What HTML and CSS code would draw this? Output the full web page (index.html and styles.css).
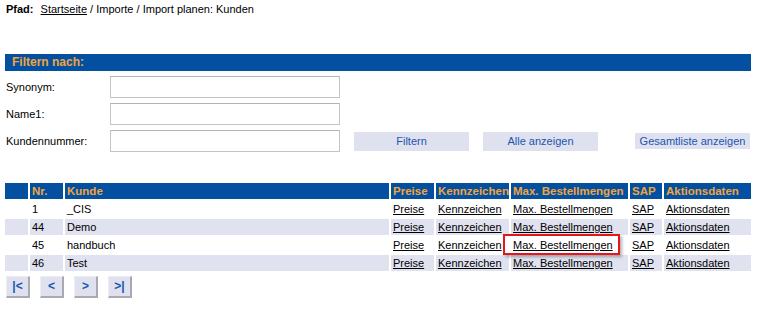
FILE: index.html
```html
<!DOCTYPE html>
<html lang="de">
<head>
  <meta charset="UTF-8" />
  <title>Import planen: Kunden</title>
  <link rel="stylesheet" href="styles.css">
</head>
<body>
  <div class="path">
    <b>Pfad:</b> <a href="#">Startseite</a> / Importe / Import planen: Kunden
  </div>

  <div class="filter">
    <div class="filter-head">Filtern nach:</div>
    <div class="filter-row">
      <label>Synonym:</label>
      <input type="text" />
    </div>
    <div class="filter-row">
      <label>Name1:</label>
      <input type="text" />
    </div>
    <div class="filter-row">
      <label>Kundennummer:</label>
      <input type="text" />
      <button class="btn">Filtern</button>
      <button class="btn">Alle anzeigen</button>
      <button class="btn btn-wide">Gesamtliste anzeigen</button>
    </div>
  </div>

  <table class="list">
    <colgroup>
      <col style="width: 23px" />
      <col style="width: 33px" />
      <col style="width: 324px" />
      <col style="width: 43px" />
      <col style="width: 73px" />
      <col style="width: 117px" />
      <col style="width: 32px" />
      <col style="width: 87px" />
    </colgroup>
    <thead>
      <tr>
        <th></th>
        <th>Nr.</th>
        <th>Kunde</th>
        <th>Preise</th>
        <th>Kennzeichen</th>
        <th>Max. Bestellmengen</th>
        <th>SAP</th>
        <th>Aktionsdaten</th>
      </tr>
    </thead>
    <tbody>
      <tr>
        <td></td>
        <td>1</td>
        <td>_CIS</td>
        <td><a href="#">Preise</a></td>
        <td><a href="#">Kennzeichen</a></td>
        <td><a href="#">Max. Bestellmengen</a></td>
        <td><a href="#">SAP</a></td>
        <td><a href="#">Aktionsdaten</a></td>
      </tr>
      <tr class="alt">
        <td></td>
        <td>44</td>
        <td>Demo</td>
        <td><a href="#">Preise</a></td>
        <td><a href="#">Kennzeichen</a></td>
        <td><a href="#">Max. Bestellmengen</a></td>
        <td><a href="#">SAP</a></td>
        <td><a href="#">Aktionsdaten</a></td>
      </tr>
      <tr>
        <td></td>
        <td>45</td>
        <td>handbuch</td>
        <td><a href="#">Preise</a></td>
        <td><a href="#">Kennzeichen</a></td>
        <td class="marked"><a href="#">Max. Bestellmengen</a></td>
        <td><a href="#">SAP</a></td>
        <td><a href="#">Aktionsdaten</a></td>
      </tr>
      <tr class="alt">
        <td></td>
        <td>46</td>
        <td>Test</td>
        <td><a href="#">Preise</a></td>
        <td><a href="#">Kennzeichen</a></td>
        <td><a href="#">Max. Bestellmengen</a></td>
        <td><a href="#">SAP</a></td>
        <td><a href="#">Aktionsdaten</a></td>
      </tr>
    </tbody>
  </table>

  <div class="pager">
    <button class="page-btn">|&lt;</button>
    <button class="page-btn">&lt;</button>
    <button class="page-btn">&gt;</button>
    <button class="page-btn">&gt;|</button>
  </div>
</body>
</html>
```

FILE: styles.css
```css
body {
  margin: 0;
  font-family: "Liberation Sans", Arial, sans-serif;
  font-size: 11px;
  color: #000;
  background: #fff;
}

a {
  color: #000;
  text-decoration: underline;
}

.path {
  padding: 2px 0 0 6px;
  height: 14px;
  line-height: 14px;
}

.path b {
  margin-right: 4px;
}

.filter {
  margin-left: 5px;
  width: 746px;
}

.filter-head {
  margin-top: 38px;
  height: 17px;
  line-height: 17px;
  padding-left: 7px;
  background-color: #0350a1;
  color: #f3a43c;
  font-size: 12px;
  font-weight: bold;
}

.filter-row {
  display: flex;
  align-items: center;
  height: 22px;
  margin-top: 5px;
}

.filter-row label {
  width: 104px;
  padding-left: 1px;
}

.filter-row input {
  width: 230px;
  height: 22px;
  box-sizing: border-box;
  border: 1px solid #c4c4c4;
  border-top-color: #b4b4b4;
  background: #fff;
  margin: 0;
}

.btn {
  margin-left: 14px;
  width: 115px;
  height: 19px;
  border: none;
  padding: 0;
  background-color: #dfe1ef;
  color: #1a55b0;
  font-family: inherit;
  font-size: 11px;
}

.btn-wide {
  margin-left: 37px;
  height: 16px;
}

.list {
  margin: 29px 0 0 3px;
  width: 750px;
  table-layout: fixed;
  border-collapse: separate;
  border-spacing: 2px;
}

.list th,
.list td {
  height: 16px;
  padding: 0 0 0 2px;
  text-align: left;
  white-space: nowrap;
  overflow: visible;
}

.list th {
  background-color: #0350a1;
  color: #f3a43c;
  font-size: 11.5px;
  font-weight: bold;
}

.list .alt td {
  background-color: #e0e2ef;
}

.list .marked {
  position: relative;
}

.list .marked::after {
  content: "";
  position: absolute;
  left: -8px;
  top: -3px;
  width: 113px;
  height: 17px;
  border: 2px solid #e3161c;
  box-shadow: 2px 2px 3px rgba(0, 0, 0, 0.3);
}

.pager {
  display: flex;
  gap: 10px;
  margin: 3px 0 0 6px;
}

.page-btn {
  width: 24px;
  height: 22px;
  padding: 0 0 1px;
  background-color: #dfe1ef;
  border-style: solid;
  border-width: 1px 2px 2px 1px;
  border-color: #eceef7 #a9a9b1 #a9a9b1 #eceef7;
  color: #1a55b0;
  font-family: inherit;
  font-size: 12px;
  font-weight: bold;
}
```
